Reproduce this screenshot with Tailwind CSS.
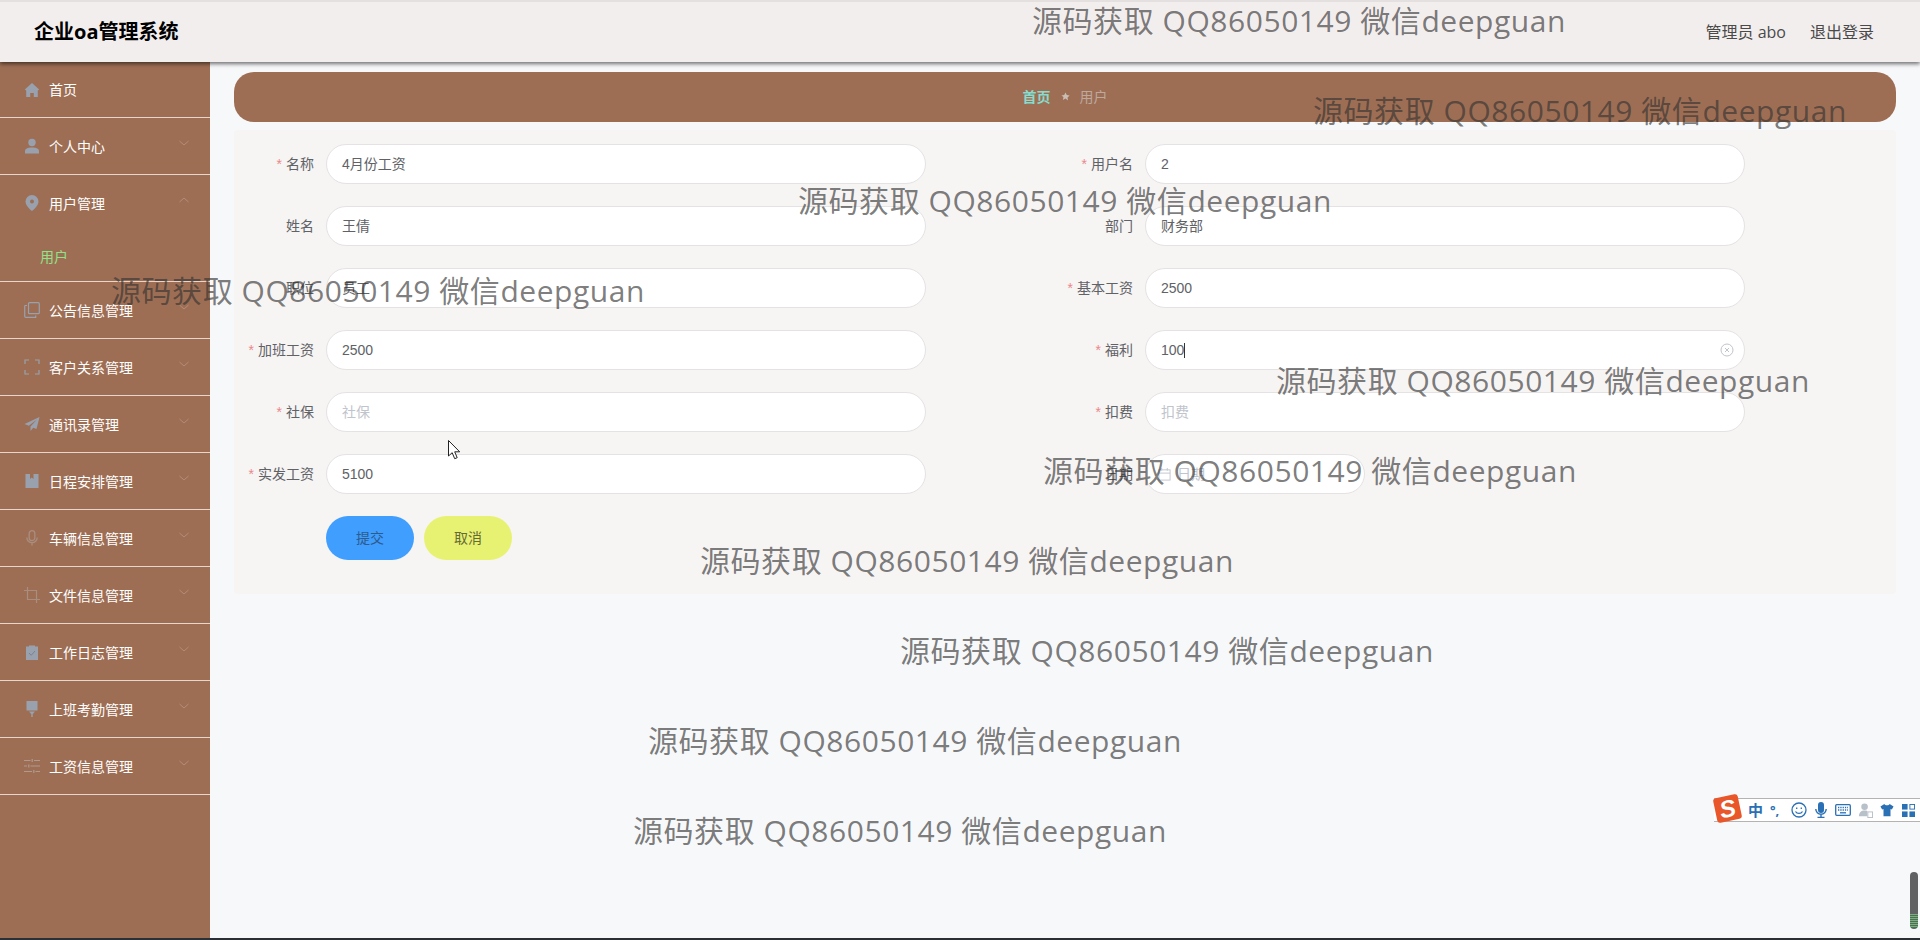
<!doctype html>
<html lang="zh-CN">
<head>
<meta charset="utf-8">
<title>企业oa管理系统</title>
<script src="https://cdn.jsdelivr.net/npm/@tailwindcss/browser@4"></script>
</head>
<body class="m-0 h-[940px] w-[1920px] overflow-hidden bg-[#f7f8fa] font-['Open_Sans','Noto_Sans_CJK_SC',sans-serif] text-[#606266]">
<div class="relative flex h-[940px] w-[1920px] flex-col overflow-hidden">

  <header class="relative z-10 flex h-[62px] shrink-0 items-center justify-between border-t-2 border-t-[#e4e0e0] bg-[#f3eeee] pl-[34px] pr-[46px] shadow-[0_2px_4px_rgba(0,0,0,0.55)]">
    <div class="text-[20px] font-bold text-black">企业oa管理系统</div>
    <div class="flex gap-[24px] text-[16px] text-[#4a4a4a]">
      <span>管理员 abo</span>
      <span>退出登录</span>
    </div>
  </header>

  <div class="flex min-h-0 flex-1">
    <aside class="w-[210px] shrink-0 bg-[#9e6e54] text-[14px] text-white">
      <div class="flex h-[56px] items-center gap-[9px] border-b border-b-[#e6d6cc] pl-[24px]">
        <svg class="size-[16px] text-[#98a1ad]" viewBox="0 0 16 16" fill="currentColor"><path d="M8 1 0.800 7.600 2.200 8.400V15h4v-4h3.600v4h4V8.400l1.400-.8z"/></svg>
        <span>首页</span>
      </div>
      <div class="flex h-[57px] items-center gap-[9px] border-b border-b-[#e6d6cc] pl-[24px] pr-[20px]">
        <svg class="size-[16px] text-[#98a1ad]" viewBox="0 0 16 16" fill="currentColor"><circle cx="8" cy="4.500" r="3.700"/><path d="M1 15.500v-2.300C1 10.800 3.500 9.500 8 9.500s7 1.300 7 3.700v2.300z"/></svg>
        <span class="flex-1">个人中心</span>
        <svg class="size-[12px] -translate-y-[3px] text-[#b48c76]" viewBox="0 0 12 12" fill="none" stroke="currentColor" stroke-width="1"><path d="M1.500 4 6 8l4.500-4"/></svg>
      </div>
      <div class="border-b border-b-[#e6d6cc]">
        <div class="flex h-[56px] items-center gap-[9px] pl-[24px] pr-[20px]">
          <svg class="size-[16px] text-[#98a1ad]" viewBox="0 0 16 16" fill="currentColor"><path fill-rule="evenodd" d="M8 0a6.500 6.500 0 0 0-6.500 6.500C1.500 11 8 16 8 16s6.500-5 6.500-9.500A6.500 6.500 0 0 0 8 0zm0 4.500a2 2 0 1 1 0 4 2 2 0 0 1 0-4z"/></svg>
          <span class="flex-1">用户管理</span>
          <svg class="size-[12px] -translate-y-[3px] text-[#b48c76]" viewBox="0 0 12 12" fill="none" stroke="currentColor" stroke-width="1"><path d="M1.500 8 6 4l4.500 4"/></svg>
        </div>
        <div class="flex h-[50px] items-center pl-[40px] text-[#8fe388]">用户</div>
      </div>
      <div class="flex h-[57px] items-center gap-[9px] border-b border-b-[#e6d6cc] pl-[24px] pr-[20px]">
        <svg class="size-[16px] text-[#98a1ad]" viewBox="0 0 16 16" fill="none" stroke="currentColor" stroke-width="1.200"><rect x="4.500" y="0.700" width="10.800" height="11" rx="1"/><path d="M3 3.500H1.500a.8.800 0 0 0-.8.800v10a1 1 0 0 0 1 1h10v-1.800"/></svg>
        <span class="flex-1">公告信息管理</span>
        <svg class="size-[12px] -translate-y-[3px] text-[#b48c76]" viewBox="0 0 12 12" fill="none" stroke="currentColor" stroke-width="1"><path d="M1.500 4 6 8l4.500-4"/></svg>
      </div>
      <div class="flex h-[57px] items-center gap-[9px] border-b border-b-[#e6d6cc] pl-[24px] pr-[20px]">
        <svg class="size-[16px] text-[#98a1ad]" viewBox="0 0 16 16" fill="none" stroke="currentColor" stroke-width="1.200"><path d="M5 1H1v4M11 1h4v4M5 15H1v-4M11 15h4v-4"/></svg>
        <span class="flex-1">客户关系管理</span>
        <svg class="size-[12px] -translate-y-[3px] text-[#b48c76]" viewBox="0 0 12 12" fill="none" stroke="currentColor" stroke-width="1"><path d="M1.500 4 6 8l4.500-4"/></svg>
      </div>
      <div class="flex h-[57px] items-center gap-[9px] border-b border-b-[#e6d6cc] pl-[24px] pr-[20px]">
        <svg class="size-[16px] text-[#98a1ad]" viewBox="0 0 16 16" fill="currentColor"><path d="M15.500 1 .5 8l4.300 1.800L13 3.500 6.500 10.500v4.500l2.700-3.300 3.300 1.400z"/></svg>
        <span class="flex-1">通讯录管理</span>
        <svg class="size-[12px] -translate-y-[3px] text-[#b48c76]" viewBox="0 0 12 12" fill="none" stroke="currentColor" stroke-width="1"><path d="M1.500 4 6 8l4.500-4"/></svg>
      </div>
      <div class="flex h-[57px] items-center gap-[9px] border-b border-b-[#e6d6cc] pl-[24px] pr-[20px]">
        <svg class="size-[16px] text-[#98a1ad]" viewBox="0 0 16 16" fill="currentColor"><path d="M1.500 1h4.500v5l1.700-1.500L9.500 6V1H14.500v14h-13z"/></svg>
        <span class="flex-1">日程安排管理</span>
        <svg class="size-[12px] -translate-y-[3px] text-[#b48c76]" viewBox="0 0 12 12" fill="none" stroke="currentColor" stroke-width="1"><path d="M1.500 4 6 8l4.500-4"/></svg>
      </div>
      <div class="flex h-[57px] items-center gap-[9px] border-b border-b-[#e6d6cc] pl-[24px] pr-[20px]">
        <svg class="size-[16px] text-[#a98d7e]" viewBox="0 0 16 16" fill="none" stroke="currentColor" stroke-width="1.300"><rect x="5.200" y="0.700" width="5.600" height="10" rx="2.800"/><path d="M2.800 7.500a5.200 5.200 0 0 0 10.400 0M8 12.800V15.500"/></svg>
        <span class="flex-1">车辆信息管理</span>
        <svg class="size-[12px] -translate-y-[3px] text-[#b48c76]" viewBox="0 0 12 12" fill="none" stroke="currentColor" stroke-width="1"><path d="M1.500 4 6 8l4.500-4"/></svg>
      </div>
      <div class="flex h-[57px] items-center gap-[9px] border-b border-b-[#e6d6cc] pl-[24px] pr-[20px]">
        <svg class="size-[16px] text-[#a98d7e]" viewBox="0 0 16 16" fill="none" stroke="currentColor" stroke-width="1.200"><path d="M3.500 0v12.500H16M0 3.500h12.500V16"/></svg>
        <span class="flex-1">文件信息管理</span>
        <svg class="size-[12px] -translate-y-[3px] text-[#b48c76]" viewBox="0 0 12 12" fill="none" stroke="currentColor" stroke-width="1"><path d="M1.500 4 6 8l4.500-4"/></svg>
      </div>
      <div class="flex h-[57px] items-center gap-[9px] border-b border-b-[#e6d6cc] pl-[24px] pr-[20px]">
        <svg class="size-[16px] text-[#98a1ad]" viewBox="0 0 16 16"><path fill="currentColor" d="M2 2.500h3V1.500h6v1h3V16H2z"/><path fill="none" stroke="#7d838c" stroke-width="1" d="M5 9l2.200 2.300L11 7"/></svg>
        <span class="flex-1">工作日志管理</span>
        <svg class="size-[12px] -translate-y-[3px] text-[#b48c76]" viewBox="0 0 12 12" fill="none" stroke="currentColor" stroke-width="1"><path d="M1.500 4 6 8l4.500-4"/></svg>
      </div>
      <div class="flex h-[57px] items-center gap-[9px] border-b border-b-[#e6d6cc] pl-[24px] pr-[20px]">
        <svg class="size-[16px] text-[#98a1ad]" viewBox="0 0 16 16" fill="currentColor"><path d="M2.500 0h11v9.500h-11zM5 10.500h6L8 14zM7.300 13h1.400v3H7.300z"/></svg>
        <span class="flex-1">上班考勤管理</span>
        <svg class="size-[12px] -translate-y-[3px] text-[#b48c76]" viewBox="0 0 12 12" fill="none" stroke="currentColor" stroke-width="1"><path d="M1.500 4 6 8l4.500-4"/></svg>
      </div>
      <div class="flex h-[57px] items-center gap-[9px] border-b border-b-[#e6d6cc] pl-[24px] pr-[20px]">
        <svg class="size-[16px] text-[#b09a8e]" viewBox="0 0 16 16" fill="none" stroke="currentColor" stroke-width="1.200"><path d="M0 2.500h6.500M10 2.500h6M0 8h3M6.500 8H16M0 13.500h8M11.500 13.500H16M8.200 1v3M4.800 6.500v3M9.800 12v3"/></svg>
        <span class="flex-1">工资信息管理</span>
        <svg class="size-[12px] -translate-y-[3px] text-[#b48c76]" viewBox="0 0 12 12" fill="none" stroke="currentColor" stroke-width="1"><path d="M1.500 4 6 8l4.500-4"/></svg>
      </div>
    </aside>

    <main class="min-w-0 flex-1 pl-[24px] pr-[24px] pt-[10px]">
      <nav class="flex h-[50px] items-center justify-center gap-[10px] rounded-[20px] bg-[#9e6e54] pb-[2px] text-[14px]">
        <span class="font-bold text-[#86dccd]">首页</span>
        <svg class="size-[9px] text-[#c9bdb5]" viewBox="0 0 12 12" fill="currentColor"><path d="M6 .5l1.700 3.600 3.800.5-2.800 2.700.7 3.900L6 8.800l-3.400 1.900.7-3.900L.5 4.600l3.800-.5z"/></svg>
        <span class="text-[#bcaaa0]">用户</span>
      </nav>

      <form class="mt-[8px] grid h-[464px] grid-cols-[819px_1fr] content-start gap-y-[22px] rounded-[4px] bg-[#f7f4f4] pl-[12px] pt-[14px] font-['Liberation_Sans','Noto_Sans_CJK_SC',sans-serif] text-[14px]">
        <div class="flex items-center"><label class="w-[68px] whitespace-nowrap text-right"><span class="mr-[4px] text-[#e9888a]">*</span>名称</label><div class="ml-[12px] flex h-[40px] w-[600px] items-center rounded-[20px] border border-[#e4e2e2] bg-white px-[15px]">4月份工资</div></div>
        <div class="flex items-center"><label class="w-[68px] whitespace-nowrap text-right"><span class="mr-[4px] text-[#e9888a]">*</span>用户名</label><div class="ml-[12px] flex h-[40px] w-[600px] items-center rounded-[20px] border border-[#e4e2e2] bg-white px-[15px]">2</div></div>

        <div class="flex items-center"><label class="w-[68px] whitespace-nowrap text-right">姓名</label><div class="ml-[12px] flex h-[40px] w-[600px] items-center rounded-[20px] border border-[#e4e2e2] bg-white px-[15px]">王倩</div></div>
        <div class="flex items-center"><label class="w-[68px] whitespace-nowrap text-right">部门</label><div class="ml-[12px] flex h-[40px] w-[600px] items-center rounded-[20px] border border-[#e4e2e2] bg-white px-[15px]">财务部</div></div>

        <div class="flex items-center"><label class="w-[68px] whitespace-nowrap text-right">职位</label><div class="ml-[12px] flex h-[40px] w-[600px] items-center rounded-[20px] border border-[#e4e2e2] bg-white px-[15px]">员工</div></div>
        <div class="flex items-center"><label class="w-[68px] whitespace-nowrap text-right"><span class="mr-[4px] text-[#e9888a]">*</span>基本工资</label><div class="ml-[12px] flex h-[40px] w-[600px] items-center rounded-[20px] border border-[#e4e2e2] bg-white px-[15px]">2500</div></div>

        <div class="flex items-center"><label class="w-[68px] whitespace-nowrap text-right"><span class="mr-[4px] text-[#e9888a]">*</span>加班工资</label><div class="ml-[12px] flex h-[40px] w-[600px] items-center rounded-[20px] border border-[#e4e2e2] bg-white px-[15px]">2500</div></div>
        <div class="flex items-center"><label class="w-[68px] whitespace-nowrap text-right"><span class="mr-[4px] text-[#e9888a]">*</span>福利</label><div class="ml-[12px] flex h-[40px] w-[600px] items-center rounded-[20px] border border-[#e4e2e2] bg-white pl-[15px] pr-[10px]"><span>100</span><span class="h-[15px] w-px bg-[#333]"></span><svg class="ml-auto size-[14px] text-[#c0c4cc]" viewBox="0 0 14 14" fill="none" stroke="currentColor" stroke-width="1"><circle cx="7" cy="7" r="6"/><path d="M5 5l4 4M9 5l-4 4"/></svg></div></div>

        <div class="flex items-center"><label class="w-[68px] whitespace-nowrap text-right"><span class="mr-[4px] text-[#e9888a]">*</span>社保</label><div class="ml-[12px] flex h-[40px] w-[600px] items-center rounded-[20px] border border-[#e4e2e2] bg-white px-[15px] text-[#c0c4cc]">社保</div></div>
        <div class="flex items-center"><label class="w-[68px] whitespace-nowrap text-right"><span class="mr-[4px] text-[#e9888a]">*</span>扣费</label><div class="ml-[12px] flex h-[40px] w-[600px] items-center rounded-[20px] border border-[#e4e2e2] bg-white px-[15px] text-[#c0c4cc]">扣费</div></div>

        <div class="flex items-center"><label class="w-[68px] whitespace-nowrap text-right"><span class="mr-[4px] text-[#e9888a]">*</span>实发工资</label><div class="ml-[12px] flex h-[40px] w-[600px] items-center rounded-[20px] border border-[#e4e2e2] bg-white px-[15px]">5100</div></div>
        <div class="flex items-center"><label class="w-[68px] whitespace-nowrap text-right">日期</label><div class="ml-[12px] flex h-[40px] w-[220px] items-center gap-[6px] rounded-[20px] border border-[#e4e2e2] bg-white px-[12px] text-[#c0c4cc]"><svg class="size-[13px]" viewBox="0 0 14 14" fill="none" stroke="currentColor"><rect x="1" y="2" width="12" height="11"/><path d="M1 5.500h12M4 0v3M10 0v3"/></svg>日期</div></div>

        <div class="col-span-2 ml-[80px] flex gap-[10px]">
          <button type="button" class="h-[44px] w-[88px] rounded-[22px] bg-[#409eff] text-[#2d5b8e]">提交</button>
          <button type="button" class="h-[44px] w-[88px] rounded-[22px] bg-[#e8f272] text-[#666a33]">取消</button>
        </div>
      </form>
    </main>
  </div>

  <!-- watermarks -->
  <div class="pointer-events-none absolute left-[1032px] top-[0px] z-20 whitespace-nowrap text-[30px] font-normal leading-[42px] tracking-[0.55px] text-[#333]/65">源码获取 QQ86050149 微信deepguan</div>
  <div class="pointer-events-none absolute left-[1313px] top-[90px] z-20 whitespace-nowrap text-[30px] font-normal leading-[42px] tracking-[0.55px] text-[#333]/65">源码获取 QQ86050149 微信deepguan</div>
  <div class="pointer-events-none absolute left-[798px] top-[180px] z-20 whitespace-nowrap text-[30px] font-normal leading-[42px] tracking-[0.55px] text-[#333]/65">源码获取 QQ86050149 微信deepguan</div>
  <div class="pointer-events-none absolute left-[111px] top-[270px] z-20 whitespace-nowrap text-[30px] font-normal leading-[42px] tracking-[0.55px] text-[#333]/65">源码获取 QQ86050149 微信deepguan</div>
  <div class="pointer-events-none absolute left-[1276px] top-[360px] z-20 whitespace-nowrap text-[30px] font-normal leading-[42px] tracking-[0.55px] text-[#333]/65">源码获取 QQ86050149 微信deepguan</div>
  <div class="pointer-events-none absolute left-[1043px] top-[450px] z-20 whitespace-nowrap text-[30px] font-normal leading-[42px] tracking-[0.55px] text-[#333]/65">源码获取 QQ86050149 微信deepguan</div>
  <div class="pointer-events-none absolute left-[700px] top-[540px] z-20 whitespace-nowrap text-[30px] font-normal leading-[42px] tracking-[0.55px] text-[#333]/65">源码获取 QQ86050149 微信deepguan</div>
  <div class="pointer-events-none absolute left-[900px] top-[630px] z-20 whitespace-nowrap text-[30px] font-normal leading-[42px] tracking-[0.55px] text-[#333]/65">源码获取 QQ86050149 微信deepguan</div>
  <div class="pointer-events-none absolute left-[648px] top-[720px] z-20 whitespace-nowrap text-[30px] font-normal leading-[42px] tracking-[0.55px] text-[#333]/65">源码获取 QQ86050149 微信deepguan</div>
  <div class="pointer-events-none absolute left-[633px] top-[810px] z-20 whitespace-nowrap text-[30px] font-normal leading-[42px] tracking-[0.55px] text-[#333]/65">源码获取 QQ86050149 微信deepguan</div>

  <!-- mouse cursor -->
  <svg class="absolute left-[448px] top-[440px] z-30 h-[20px] w-[13px]" viewBox="0 0 13 20" fill="#fff" stroke="#222" stroke-width="1"><path d="M.5.500v15.500l3.700-3.300 2.500 6 2.500-1-2.500-5.900h5z"/></svg>

  <!-- Sogou IME toolbar -->
  <div class="absolute left-[1714px] top-[798px] z-30 h-[24px] w-[206px]">
    <div class="flex h-[24px] w-[206px] items-center border-y border-y-[#b5b2b2] bg-white pl-[34px] text-[#2a70b5]" >
      <span class="w-[14px] text-[15px] font-bold leading-none">中</span>
      <span class="ml-[8px] w-[12px] text-[13px] font-bold leading-none">°,</span>
      <svg class="ml-[9px] size-[16px]" viewBox="0 0 16 16" fill="none" stroke="currentColor" stroke-width="1.300"><circle cx="8" cy="8" r="7"/><path d="M4.500 9.500c1.500 2.500 5.500 2.500 7 0M5.700 5.500v1.500M10.300 5.500v1.500"/></svg>
      <svg class="ml-[8px] h-[16px] w-[12px]" viewBox="0 0 12 16" fill="currentColor"><rect x="3" y="0" width="6" height="11" rx="3"/><path d="M.8 7a5.200 5.200 0 0 0 10.400 0M6 12.500V15M2.500 15.500h7" fill="none" stroke="currentColor" stroke-width="1.400"/></svg>
      <svg class="ml-[8px] h-[12px] w-[16px]" viewBox="0 0 16 12" fill="none" stroke="currentColor" stroke-width="1.300"><rect x=".7" y=".7" width="14.600" height="10.600" rx="1"/><path d="M3 3.500h10M3 6h10" stroke-dasharray="1.300 1"/><path d="M5 8.800h6"/></svg>
      <svg class="ml-[7px] size-[15px] text-[#b8c0c8]" viewBox="0 0 16 16" fill="currentColor"><circle cx="7" cy="4" r="3.500"/><path d="M1 14c0-4 2.500-6 6-6 2 0 3 .5 3 .5V14z"/><rect x="10.500" y="9.500" width="5" height="6" fill="#fff" stroke="currentColor"/></svg>
      <svg class="ml-[7px] size-[14px]" viewBox="0 0 16 16" fill="currentColor"><path d="M5 1 0.500 4 2.500 7.500 4 6.800V15h8V6.800l1.500.7L15.500 4 11 1C10.500 3 5.500 3 5 1z"/></svg>
      <svg class="ml-[8px] size-[13px]" viewBox="0 0 14 14" fill="currentColor"><rect x="0" y="0" width="6" height="6"/><rect x="8.500" y="0.500" width="5" height="5" fill="none" stroke="currentColor"/><rect x="0" y="8" width="6" height="6"/><rect x="8" y="8" width="6" height="6"/></svg>
    </div>
    <div class="absolute left-[1px] top-[-2px] flex size-[25px] rotate-[-12deg] items-center justify-center rounded-[3px] bg-[#e8562a] font-['Liberation_Sans',sans-serif] text-[24px] font-bold italic leading-none text-white">S</div>
  </div>

  <!-- floating widget bottom right -->
  <div class="absolute left-[1910px] top-[872px] z-30 flex h-[57px] w-[8px] flex-col justify-end overflow-hidden rounded-[4px] bg-[#5f6162] pb-[2px]">
    <div class="h-[13px] w-full bg-[repeating-linear-gradient(to_bottom,#67b96f_0,#67b96f_1px,#5f6162_1px,#5f6162_2px)]"></div>
  </div>

  <!-- bottom edge -->
  <div class="absolute bottom-0 left-0 z-30 h-[2px] w-full bg-[#2b2f36]"></div>
</div>
</body>
</html>
